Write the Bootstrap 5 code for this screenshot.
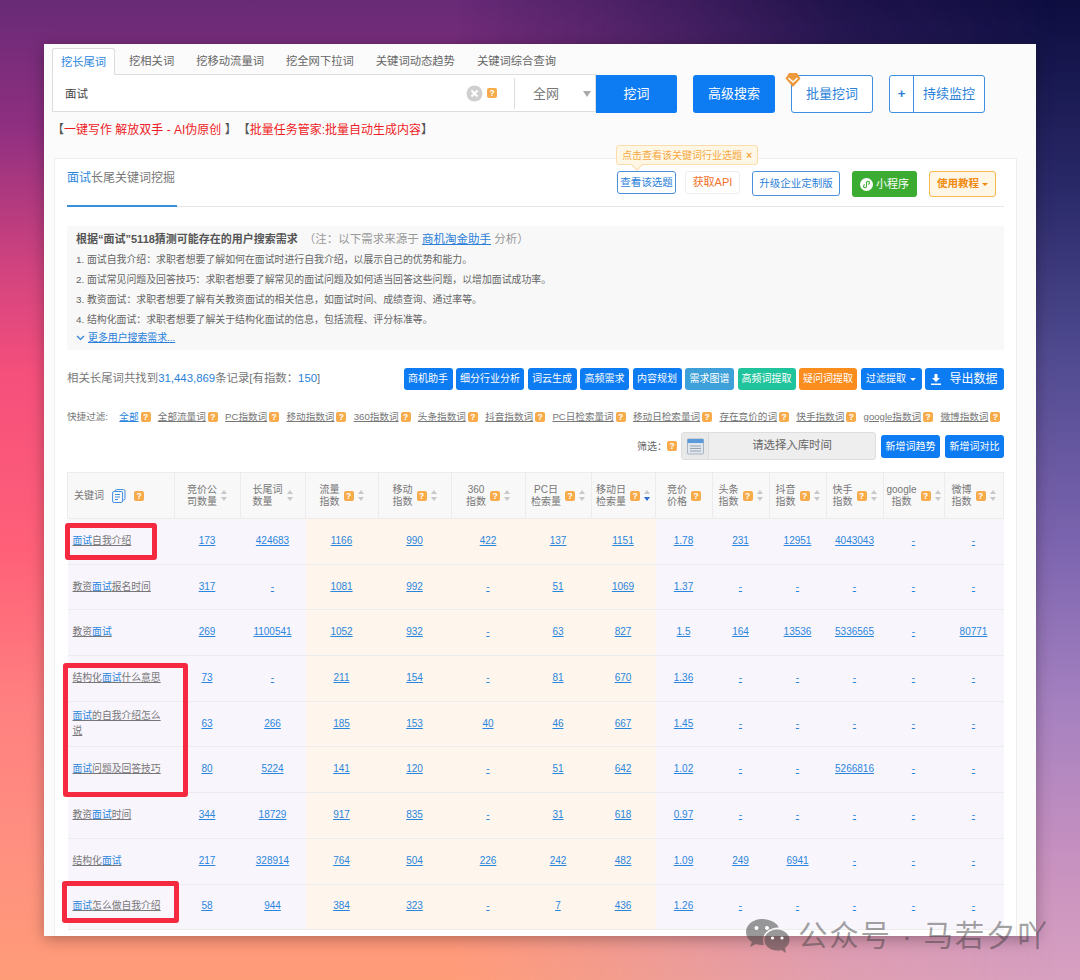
<!DOCTYPE html>
<html lang="zh-CN">
<head>
<meta charset="UTF-8">
<title>挖长尾词</title>
<link rel="stylesheet" href="https://cdn.jsdelivr.net/npm/bootstrap@5.3.0/dist/css/bootstrap.min.css">
<style>
html, body { height: 980px; overflow: hidden; }
body {
    margin: 0; padding: 44px 44px 0; position: relative;
    font-family: "Liberation Sans", "Noto Sans CJK SC", sans-serif; font-size: 10px; color: #666;
    background: linear-gradient(180deg, #0d0d40 0%, #2b2a6a 20%, #4f4a90 36%, #7d65b0 56%, #a581c0 72%, #c690c0 87%, #d8a0c0 100%);
}
body::before {
    content: ""; position: absolute; inset: 0;
    background: linear-gradient(180deg, #682a76 0%, #8f2f80 13%, #d4447f 28%, #f54f7c 38%, #ff6078 56%, #ff8080 72%, #ff9080 87%, #ff9c78 100%);
    -webkit-mask-image: linear-gradient(90deg, #000 0%, #000 42%, rgba(0,0,0,.75) 55%, rgba(0,0,0,.2) 78%, transparent 98%);
    mask-image: linear-gradient(90deg, #000 0%, #000 42%, rgba(0,0,0,.75) 55%, rgba(0,0,0,.2) 78%, transparent 98%);
}
.app-window { position: relative; height: 892px; overflow: hidden; background: #fbfbfb; padding: 4px 8px 0; box-shadow: 0 3px 14px rgba(0,0,0,.3); }

/* top tabs and search */
.tab-strip { width: 544px; height: 27px; border-bottom: 1px solid #ddd; font-size: 11.3px; flex-wrap: nowrap; white-space: nowrap; }
.tab-strip .nav-link { border-radius: 3px 3px 0 0; color: #666; padding: 0; height: 27px; line-height: 27px; margin-right: 22px; border: 0; }
.tab-strip .nav-link.active { width: 63px; text-align: center; color: #2a86dc; background: #fff; border: 1px solid #ddd; border-bottom-color: #fff; margin-right: 14px; line-height: 26px; }
.search-row { height: 38px; }
.search-box { width: 544px; height: 37px; background: #fff; border: 1px solid #ddd; border-top: 0; font-size: 11.5px; color: #444; padding-left: 12px; }
.search-word { padding-top: 4px; }
.search-scope { width: 81px; height: 31px; border-left: 1px solid #ddd; font-size: 13px; color: #777; padding: 2px 4px 0 18px; margin-left: 17px; }
.scope-arrow { border-top: 6px solid #aaa; border-left: 4.5px solid transparent; border-right: 4.5px solid transparent; }
.search-btn { width: 81px; height: 38px; border-radius: 0 2px 2px 0; font-size: 13px; padding: 0; background: #0d7bf2; border: 0; }
.top-btn { width: 82px; height: 38px; padding: 0; font-size: 13px; border-radius: 3px; margin-left: 16px; }
.solid-blue { background: #0d7bf2; border: 0; color: #fff; }
.line-blue { background: #fff; border: 1px solid #3f8fe0; color: #2a7fd8; }
.monitor-group { width: 96px; }
.monitor-plus { width: 24px; border-right: 1px solid #3f8fe0; font-weight: bold; align-self: stretch; }
.vip-gem { position: absolute; left: 10px; top: -3px; }
.promo-line { font-size: 12px; color: #ee1c25; height: 45px; padding: 8px 0 0 0; }
.promo-line b { font-weight: normal; color: #555; }
.promo-gap { margin-right: 7px; }

/* result card */
.result-card { width: 963px; margin-left: 2px; height: 800px; border: 1px solid #eee; border-radius: 0; background: #fff; padding: 0 12px; }
.card-head { height: 48px; border-bottom: 1px solid #e6e6e6; position: relative; }
.card-title-text { width: 110px; height: 48px; border-bottom: 2px solid #3a8fdc; font-size: 12px; color: #777; padding-top: 10px; white-space: nowrap; }
.hl { color: #2a86dc; }
.act-list { padding-top: 12px; margin-right: 8px; }
.act { height: 25px; padding: 0; font-size: 10.5px; border-radius: 3px; display: flex; align-items: center; justify-content: center; }
.act-topic { width: 59px; height: 23px; border: 1px solid #4a90dc; color: #2a7fd8; background: #fff; }
.act-api { width: 55px; height: 23px; border: 1px solid #eee; color: #f0702a; background: #fff; margin-left: 9px; font-size: 11px; }
.act-up { width: 88px; border: 1px solid #4a90dc; color: #2a7fd8; background: #fff; margin-left: 12px; }
.act-mini { width: 65px; height: 26px; background: #3cab32; color: #fff; margin-left: 12px; gap: 3px; border: 0; font-size: 11px; }
.act-guide { width: 67px; height: 26px; background: #fff6e6; border: 1px solid #f5b84e; color: #f08a10; margin-left: 12px; font-weight: bold; }
.act-guide::after { margin-left: 3px; vertical-align: 2px; border-width: 3px 3px 0; }
.hint-pop { position: absolute; left: 549px; top: -14px; width: 142px; height: 20px; background: #fff7e6; border: 1px solid #fbdcaa; border-radius: 3px; color: #f5a742; padding: 0 5px; z-index: 3; }
.hint-pop::after { content: ""; position: absolute; left: 16px; bottom: -5px; width: 8px; height: 8px; background: #fff7e6; border-right: 1px solid #fbdcaa; border-bottom: 1px solid #fbdcaa; transform: rotate(45deg); }
.need-panel { margin-top: 19px; height: 124px; background: #f8f8f8; padding: 3px 9px; color: #666; font-size: 9.9px; line-height: 20.1px; }
.need-panel p { margin: 0; }
.need-title b { color: #555; font-size: 11px; }
.need-title span { color: #999; font-size: 11.5px; }
.need-title a, .more-link { color: #2a7fd8; }
.need-more { line-height: 16px; display: flex; align-items: center; gap: 3px; }

/* toolbar */
.stat-row { margin-top: 17px; height: 23px; font-size: 11.4px; color: #777; }
.stat-row em { font-style: normal; color: #2a7fd8; }
.tool { height: 22px; font-size: 10px; padding: 0; width: 49px; border: 0; border-radius: 3px; color: #fff; background: #0d7bf2; margin-left: 3.5px; white-space: nowrap; }
.tool.w68 { width: 68px; } .tool.w57 { width: 58px; } .tool.w62 { width: 61px; } .tool.w79 { width: 79px; font-size: 12px; }
.tool-sky { background: #3da0d8; } .tool-teal { background: #20c49c; } .tool-org { background: #fb8c1e; }
.tool.dropdown-toggle::after { margin-left: 4px; vertical-align: 1px; border-width: 3px 3px 0; }
.quick-row { margin-top: 19px; height: 16px; font-size: 9.6px; color: #777; gap: 7.3px; white-space: nowrap; }
.quick-row a { color: #777; }
.quick-row a.hl { color: #2a86dc; }
.quick-item { display: inline-flex; align-items: center; gap: 2px; }
.qmark { display: inline-block; width: 10px; height: 10px; line-height: 10px; border-radius: 2px; background: #f8ab4a; color: #fff; font-size: 8.5px; font-weight: bold; text-align: center; font-style: normal; flex: none; font-family: "Liberation Sans", sans-serif; }
.filter-row { margin-top: 7px; height: 28px; }
.date-btn { width: 195px; height: 28px; background: #eee; border: 1px solid #ddd; border-radius: 3px; font-size: 11.4px; color: #666; }
.date-ico { width: 27px; height: 26px; border-right: 1px solid #ddd; background: #e9e9e9; }
.date-text { flex: 1; text-align: center; }
.trend-btn { width: 59px; height: 23px; margin-left: 5px; font-size: 10px; padding: 0; border: 0; border-radius: 3px; background: #0d7bf2; color: #fff; }

/* keyword table */
.kw-table { width: 937px; margin: 12px 0 0; table-layout: fixed; border-collapse: collapse; font-size: 10px; }
.kw-table th { height: 46px; padding: 0 2px; background: #f8f8f8; font-weight: normal; color: #777; line-height: 12px; border: 1px solid #ececec; vertical-align: middle; }
.kw-table td { height: 45.7px; padding: 0 3px 2px 2px; text-align: center; vertical-align: middle; background: #f9f5fd; border: 0; border-bottom: 1px solid #ececec; line-height: 15px; }
.kw-table td.warm { background: #fef5ec; }
.kw-table td.kw-cell { text-align: left; padding: 0 12px 2px 5px; font-size: 9.8px; }
.kw-table td a { color: #2a86dc; }
.kw-table td.kw-cell a { color: #777; display: inline-block; }
.kw-table td.kw-cell a .hl { color: #2a86dc; }
.sorter { display: inline-block; flex: none; width: 7px; height: 11px; position: relative; }
.sorter::before, .sorter::after { content: ""; position: absolute; left: 0; border-left: 3.5px solid transparent; border-right: 3.5px solid transparent; }
.sorter::before { top: 0; border-bottom: 4px solid #c8c8c8; }
.sorter::after { bottom: 0; border-top: 4px solid #c8c8c8; }
.sorter.on::after { border-top-color: #2a6fd0; }

/* annotations over the picture */
.red-box { position: absolute; border: 5px solid #f52a40; border-radius: 3px; z-index: 5; }
.mark-a { left: 65px; top: 523px; width: 92px; height: 37px; }
.mark-b { left: 63px; top: 663px; width: 125px; height: 134px; }
.mark-c { left: 62px; top: 881px; width: 117px; height: 42px; }
.watermark { position: absolute; left: 746px; top: 917px; display: flex; align-items: center; gap: 8px; z-index: 6; font-size: 29.5px; line-height: 38px; letter-spacing: 1.8px; color: rgba(60,60,60,.48); white-space: nowrap; }
</style>
</head>
<body>

<div class="app-window">
    <ul class="nav tab-strip">
        <li class="nav-item"><a class="nav-link active" href="#">挖长尾词</a></li>
        <li class="nav-item"><a class="nav-link" href="#">挖相关词</a></li>
        <li class="nav-item"><a class="nav-link" href="#">挖移动流量词</a></li>
        <li class="nav-item"><a class="nav-link" href="#">挖全网下拉词</a></li>
        <li class="nav-item"><a class="nav-link" href="#">关键词动态趋势</a></li>
        <li class="nav-item"><a class="nav-link" href="#">关键词综合查询</a></li>
    </ul>

    <div class="d-flex search-row">
        <div class="search-box d-flex align-items-center">
            <span class="flex-grow-1 search-word">面试</span>
            <svg width="17" height="17" viewBox="0 0 17 17"><circle cx="8.5" cy="8.5" r="8" fill="#cfcfcf"/><path d="M5.5 5.5l6 6M11.5 5.5l-6 6" stroke="#fff" stroke-width="2"/></svg>
            <i class="qmark ms-1">?</i>
            <div class="search-scope d-flex align-items-center justify-content-between">全网<span class="scope-arrow"></span></div>
        </div>
        <button class="btn btn-primary search-btn">挖词</button>
        <button class="btn top-btn solid-blue">高级搜索</button>
        <div class="position-relative">
            <button class="btn top-btn line-blue">批量挖词</button>
            <svg class="vip-gem" width="16" height="15" viewBox="0 0 16 15"><path d="M8 15L0.5 6.500 4 1h8l3.500 5.500z" fill="#ee9a3c"/><path d="M3.500 6L8 10l4.500-4" fill="none" stroke="#fff" stroke-width="1.4"/></svg>
        </div>
        <div class="btn top-btn line-blue monitor-group d-flex align-items-center p-0">
            <span class="monitor-plus d-flex align-items-center justify-content-center">+</span><span class="flex-grow-1">持续监控</span>
        </div>
    </div>

    <div class="promo-line"><b>【</b>一键写作 解放双手 - AI伪原创 <b class="promo-gap">】</b><b>【</b>批量任务管家:批量自动生成内容<b>】</b></div>

    <div class="card result-card">
        <div class="card-head d-flex justify-content-between">
            <div class="card-title-text"><span class="hl">面试</span>长尾关键词挖掘</div>
            <div class="hint-pop d-flex align-items-center justify-content-between"><span>点击查看该关键词行业选题</span><span class="fw-bold">×</span></div>
            <div class="d-flex act-list">
                <a class="act act-topic text-decoration-none" href="#">查看该选题</a>
                <a class="act act-api text-decoration-none" href="#">获取API</a>
                <a class="act act-up text-decoration-none" href="#">升级企业定制版</a>
                <a class="act act-mini text-decoration-none" href="#">
                    <svg width="13" height="13" viewBox="0 0 13 13"><circle cx="6.5" cy="6.5" r="6.5" fill="#fff"/><path d="M6.5 5v3.2a1.5 1.5 0 1 1-1.5-1.5M6.5 8V4.8A1.5 1.5 0 1 1 8 6.3" fill="none" stroke="#3cab32" stroke-width="1.1"/></svg>小程序</a>
                <a class="act act-guide dropdown-toggle text-decoration-none" href="#">使用教程</a>
            </div>
        </div>

        <div class="need-panel">
            <p class="need-title"><b>根据“面试”5118猜测可能存在的用户搜索需求</b> <span>&nbsp;（注：以下需求来源于 <a href="#">商机淘金助手</a> 分析）</span></p>
            <p>1. 面试自我介绍：求职者想要了解如何在面试时进行自我介绍，以展示自己的优势和能力。</p>
            <p>2. 面试常见问题及回答技巧：求职者想要了解常见的面试问题及如何适当回答这些问题，以增加面试成功率。</p>
            <p>3. 教资面试：求职者想要了解有关教资面试的相关信息，如面试时间、成绩查询、通过率等。</p>
            <p>4. 结构化面试：求职者想要了解关于结构化面试的信息，包括流程、评分标准等。</p>
            <p class="need-more"><svg width="9" height="6" viewBox="0 0 9 6"><path d="M1 1l3.500 3.500L8 1" fill="none" stroke="#2a7fd8" stroke-width="1.2"/></svg><a class="more-link" href="#">更多用户搜索需求...</a></p>
        </div>

        <div class="stat-row d-flex align-items-center">
            <span class="flex-grow-1">相关长尾词共找到<em>31,443,869</em>条记录[有指数：<em>150</em>]</span>
            <button class="btn tool">商机助手</button>
            <button class="btn tool w68">细分行业分析</button>
            <button class="btn tool">词云生成</button>
            <button class="btn tool">高频需求</button>
            <button class="btn tool">内容规划</button>
            <button class="btn tool tool-sky">需求图谱</button>
            <button class="btn tool w57 tool-teal">高频词提取</button>
            <button class="btn tool w57 tool-org">疑问词提取</button>
            <button class="btn tool w62 dropdown-toggle">过滤提取</button>
            <button class="btn tool w79"><svg class="me-2" width="10" height="11" viewBox="0 0 10 11"><path d="M3.500 0h3v4H9L5 8 1 4h2.500zM0 9.500h10V11H0z" fill="#fff"/></svg>导出数据</button>
        </div>

        <div class="quick-row d-flex align-items-center">
            <span class="me-1">快捷过滤:</span>
            <span class="quick-item"><a class="hl" href="#">全部</a><i class="qmark">?</i></span>
            <span class="quick-item"><a href="#">全部流量词</a><i class="qmark">?</i></span>
            <span class="quick-item"><a href="#">PC指数词</a><i class="qmark">?</i></span>
            <span class="quick-item"><a href="#">移动指数词</a><i class="qmark">?</i></span>
            <span class="quick-item"><a href="#">360指数词</a><i class="qmark">?</i></span>
            <span class="quick-item"><a href="#">头条指数词</a><i class="qmark">?</i></span>
            <span class="quick-item"><a href="#">抖音指数词</a><i class="qmark">?</i></span>
            <span class="quick-item"><a href="#">PC日检索量词</a><i class="qmark">?</i></span>
            <span class="quick-item"><a href="#">移动日检索量词</a><i class="qmark">?</i></span>
            <span class="quick-item"><a href="#">存在竞价的词</a><i class="qmark">?</i></span>
            <span class="quick-item"><a href="#">快手指数词</a><i class="qmark">?</i></span>
            <span class="quick-item"><a href="#">google指数词</a><i class="qmark">?</i></span>
            <span class="quick-item"><a href="#">微博指数词</a><i class="qmark">?</i></span>
        </div>

        <div class="filter-row d-flex align-items-center justify-content-end">
            <span>筛选：</span><i class="qmark me-1">?</i>
            <div class="date-btn d-flex align-items-center">
                <span class="date-ico d-flex align-items-center justify-content-center">
                    <svg width="17" height="17" viewBox="0 0 17 17"><rect x=".5" y="1" width="16" height="15" rx="1" fill="#dfe6ee" stroke="#aab4c0"/><rect x=".5" y="1" width="16" height="4" fill="#5a9ad8"/><path d="M3 8h11M3 10.500h11M3 13h11" stroke="#9aa4b0"/></svg>
                </span>
                <span class="date-text">请选择入库时间</span>
            </div>
            <button class="btn trend-btn">新增词趋势</button>
            <button class="btn trend-btn">新增词对比</button>
        </div>

        <table class="table kw-table">
            <colgroup>
                <col style="width:107px"><col style="width:66px"><col style="width:65px"><col style="width:73px"><col style="width:73px"><col style="width:74px"><col style="width:66px"><col style="width:64px"><col style="width:57px"><col style="width:57px"><col style="width:57px"><col style="width:57px"><col style="width:61px"><col style="width:59px">
            </colgroup>
            <thead>
                <tr>
                    <th><div class="d-flex align-items-center gap-1 ps-1">关键词
                        <svg class="mx-1" width="14" height="14" viewBox="0 0 14 14"><rect x="3" y=".6" width="10" height="10.500" rx="1.500" fill="none" stroke="#3f8fe0"/><rect x=".6" y="2.500" width="10" height="11" rx="1.500" fill="#f8f8f8" stroke="#3f8fe0"/><path d="M3 5.500h5M3 8h5M3 10.500h3" stroke="#3f8fe0"/></svg>
                        <i class="qmark">?</i></div></th>
                    <th><div class="d-flex align-items-center justify-content-center gap-1"><span>竞价公<br>司数量</span><i class="sorter"></i></div></th>
                    <th><div class="d-flex align-items-center justify-content-center gap-1"><span>长尾词<br>数量</span><i class="sorter"></i></div></th>
                    <th><div class="d-flex align-items-center justify-content-center gap-1"><span>流量<br>指数</span><i class="qmark">?</i><i class="sorter"></i></div></th>
                    <th><div class="d-flex align-items-center justify-content-center gap-1"><span>移动<br>指数</span><i class="qmark">?</i><i class="sorter"></i></div></th>
                    <th><div class="d-flex align-items-center justify-content-center gap-1"><span class="text-center">360<br>指数</span><i class="qmark">?</i><i class="sorter"></i></div></th>
                    <th><div class="d-flex align-items-center justify-content-center gap-1"><span class="text-center">PC日<br>检索量</span><i class="qmark">?</i><i class="sorter"></i></div></th>
                    <th><div class="d-flex align-items-center justify-content-center gap-1"><span>移动日<br>检索量</span><i class="qmark">?</i><i class="sorter on"></i></div></th>
                    <th><div class="d-flex align-items-center justify-content-center gap-1"><span>竞价<br>价格</span><i class="qmark">?</i></div></th>
                    <th><div class="d-flex align-items-center justify-content-center gap-1"><span>头条<br>指数</span><i class="qmark">?</i><i class="sorter"></i></div></th>
                    <th><div class="d-flex align-items-center justify-content-center gap-1"><span>抖音<br>指数</span><i class="qmark">?</i><i class="sorter"></i></div></th>
                    <th><div class="d-flex align-items-center justify-content-center gap-1"><span>快手<br>指数</span><i class="qmark">?</i><i class="sorter"></i></div></th>
                    <th><div class="d-flex align-items-center justify-content-center gap-1"><span class="text-center">google<br>指数</span><i class="qmark">?</i><i class="sorter"></i></div></th>
                    <th><div class="d-flex align-items-center justify-content-center gap-1"><span>微博<br>指数</span><i class="qmark">?</i><i class="sorter"></i></div></th>
                </tr>
            </thead>
            <tbody id="rows"></tbody>
        </table>
    </div>
</div>

<div class="red-box mark-a"></div>
<div class="red-box mark-b"></div>
<div class="red-box mark-c"></div>

<div class="watermark">
    <svg width="44" height="34" viewBox="0 0 44 34"><path d="M16 0C7.200 0 0 5.800 0 13c0 4 2.200 7.500 5.800 10L4 28l6-3c2 .6 4 1 6 1 .6 0 1.300 0 1.900-.1C17.300 24 17 22.500 17 21c0-7 6.800-12.500 15-12.500h.8C30.800 3.600 24 0 16 0z" fill="rgba(70,70,70,.55)"/><path d="M43.500 21c0-6-5.800-10.500-12.500-10.500S18.500 15 18.500 21 24.300 31.500 31 31.500c1.500 0 3-.2 4.300-.6L40 34l-1-5c2.800-2 4.500-4.800 4.500-8z" fill="rgba(70,70,70,.55)"/><circle cx="10.500" cy="9" r="2" fill="#fff"/><circle cx="21" cy="9" r="2" fill="#fff"/><circle cx="26.500" cy="19" r="1.600" fill="#fff"/><circle cx="36" cy="19" r="1.600" fill="#fff"/></svg>
    <span>公众号 · 马若夕吖</span>
</div>

<script>
    var data = [
        ['<span class="hl">面试</span>自我介绍', '173','424683','1166','990','422','137','1151','1.78','231','12951','4043043','-','-'],
        ['教资<span class="hl">面试</span>报名时间', '317','-','1081','992','-','51','1069','1.37','-','-','-','-','-'],
        ['教资<span class="hl">面试</span>', '269','1100541','1052','932','-','63','827','1.5','164','13536','5336565','-','80771'],
        ['结构化<span class="hl">面试</span>什么意思', '73','-','211','154','-','81','670','1.36','-','-','-','-','-'],
        ['<span class="hl">面试</span>的自我介绍怎么说', '63','266','185','153','40','46','667','1.45','-','-','-','-','-'],
        ['<span class="hl">面试</span>问题及回答技巧', '80','5224','141','120','-','51','642','1.02','-','-','5266816','-','-'],
        ['教资<span class="hl">面试</span>时间', '344','18729','917','835','-','31','618','0.97','-','-','-','-','-'],
        ['结构化<span class="hl">面试</span>', '217','328914','764','504','226','242','482','1.09','249','6941','-','-','-'],
        ['<span class="hl">面试</span>怎么做自我介绍', '58','944','384','323','-','7','436','1.26','-','-','-','-','-']
    ];
    var html = '';
    data.forEach(function (row) {
        html += '<tr>';
        row.forEach(function (val, i) {
            var cls = i === 0 ? 'kw-cell' : (i >= 3 && i <= 7 ? 'warm' : '');
            html += '<td class="' + cls + '"><a href="#">' + val + '</a></td>';
        });
        html += '</tr>';
    });
    document.getElementById('rows').innerHTML = html;
</script>
<script src="https://cdn.jsdelivr.net/npm/bootstrap@5.3.0/dist/js/bootstrap.bundle.min.js"></script>
</body>
</html>
